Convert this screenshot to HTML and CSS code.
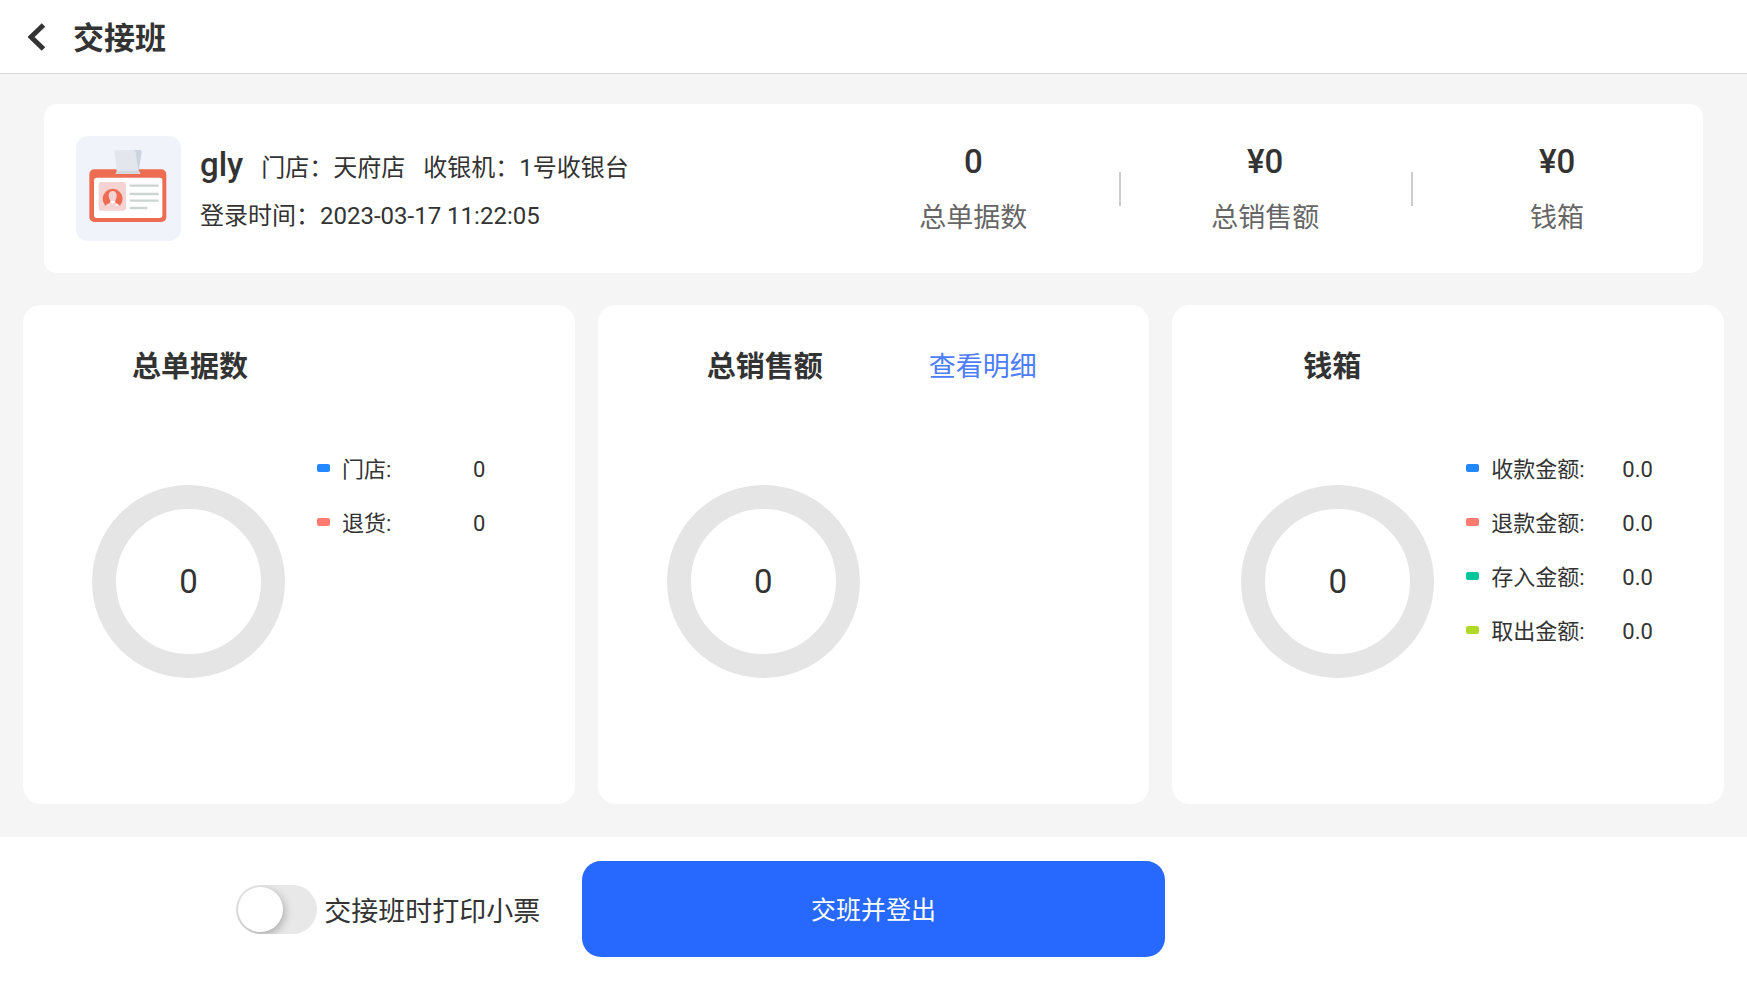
FILE: index.html
```html
<!DOCTYPE html>
<html lang="zh-CN">
<head>
  <meta charset="UTF-8">
  <meta name="viewport" content="width=device-width, initial-scale=1.0">
  <title>交接班</title>
  <link rel="stylesheet" href="styles.css">
</head>
<body>

  <header class="header">
    <button type="button" class="back-btn" aria-label="返回">
      <svg width="18" height="28" viewBox="0 0 18 28">
        <path d="M15.5 2 L3 14 L15.5 26" fill="none" stroke="#333" stroke-width="5"/>
      </svg>
    </button>
    <h1>交接班</h1>
  </header>

  <main class="main">

    <section class="summary">
      <div class="user">
        <div class="avatar">
          <svg viewBox="0 0 315 315">
            <rect x="40" y="100" width="231" height="158" rx="15" fill="#ee6c52"/>
            <rect x="54" y="125" width="205" height="121" rx="8" fill="#fff"/>
            <!-- clip -->
            <path d="M172 42 H192 Q198 43 197 49 L188 105 H172 Z" fill="#ccd2df"/>
            <path d="M122 42 H171 Q178 42 179 49 L187 105 H122 L116 49 Q115 42 122 42 Z" fill="#e3e6ec"/>
            <path d="M123 104 H189 L194 114 H118 Z" fill="#d3d7df"/>
            <!-- photo -->
            <rect x="68" y="138" width="82" height="86" rx="7" fill="#f5d3d2"/>
            <path d="M88 209 A30 30 0 1 1 132 209 Q127 203 118 200 V194 Q122 189 122 178 A12 13 0 0 0 98 178 Q98 189 103 194 V200 Q93 203 88 209 Z" fill="#ee6c52"/>
            <path d="M102 199 Q110 205 118 199 L115 195 H105 Z" fill="#fff"/>
            <path d="M117 204 H126 V210 H120 Z" fill="#fbeae9"/>
            <!-- lines -->
            <path d="M161 149 H248 M161 174 H248 M161 194 H248 M161 216 H214" stroke="#cdd5d3" stroke-width="7"/>
          </svg>
        </div>
        <div class="user-info">
          <div class="user-row">
            <strong class="user-name">gly</strong>
            <span>门店：天府店</span>
            <span>收银机：1号收银台</span>
          </div>
          <div class="user-row">
            <span>登录时间：2023-03-17 11:22:05</span>
          </div>
        </div>
      </div>

      <div class="stats">
        <div class="stat">
          <strong>0</strong>
          <span>总单据数</span>
        </div>
        <div class="stat">
          <strong>¥0</strong>
          <span>总销售额</span>
        </div>
        <div class="stat">
          <strong>¥0</strong>
          <span>钱箱</span>
        </div>
      </div>
    </section>

    <section class="panels">
      <div class="panel">
        <div class="panel-head">
          <h2>总单据数</h2>
        </div>
        <div class="panel-body">
          <div class="ring">0</div>
          <ul class="legend">
            <li><i class="dot blue"></i><span class="label">门店:</span><span>0</span></li>
            <li><i class="dot red"></i><span class="label">退货:</span><span>0</span></li>
          </ul>
        </div>
      </div>

      <div class="panel">
        <div class="panel-head">
          <h2>总销售额</h2>
          <a href="#">查看明细</a>
        </div>
        <div class="panel-body">
          <div class="ring">0</div>
        </div>
      </div>

      <div class="panel cash">
        <div class="panel-head">
          <h2>钱箱</h2>
        </div>
        <div class="panel-body">
          <div class="ring">0</div>
          <ul class="legend">
            <li><i class="dot blue"></i><span class="label">收款金额:</span><span>0.0</span></li>
            <li><i class="dot red"></i><span class="label">退款金额:</span><span>0.0</span></li>
            <li><i class="dot green"></i><span class="label">存入金额:</span><span>0.0</span></li>
            <li><i class="dot lime"></i><span class="label">取出金额:</span><span>0.0</span></li>
          </ul>
        </div>
      </div>
    </section>

  </main>

  <footer class="footer">
    <div class="print-option">
      <input type="checkbox" id="printTicket" class="switch">
      <label for="printTicket">交接班时打印小票</label>
    </div>
    <button type="button" class="submit-btn">交班并登出</button>
  </footer>

</body>
</html>
```
FILE: styles.css
```css
* {
  box-sizing: border-box;
  margin: 0;
  padding: 0;
}

body {
  font-family: Roboto, "Noto Sans CJK SC", sans-serif;
  color: #333;
  background-color: #f5f5f5;
  min-height: 100vh;
  display: flex;
  flex-direction: column;
}

button {
  font-family: inherit;
  border: none;
  cursor: pointer;
}

/* header */
.header {
  display: flex;
  align-items: center;
  gap: 27px;
  height: 74px;
  padding-left: 28px;
  background-color: #fff;
  border-bottom: 1px solid #d8d8d8;
}

.back-btn {
  display: flex;
  background: none;
}

.header h1 {
  padding-top: 5px;
  font-size: 31px;
  font-weight: 700;
  line-height: 40px;
}

.main {
  flex: 1;
  display: flex;
  flex-direction: column;
  gap: 32px;
  padding: 30px 23px 33px;
}

/* user and totals */
.summary {
  display: grid;
  grid-template-columns: 17fr 19fr;
  align-items: center;
  margin: 0 21px;
  padding: 32px 0;
  background-color: #fff;
  border-radius: 13px;
}

.user {
  display: flex;
  align-items: center;
  gap: 19px;
  padding-left: 32px;
}

.avatar {
  width: 105px;
  height: 105px;
  background-color: #f0f4fa;
  border-radius: 12px;
}

.avatar svg {
  display: block;
}

.user-info {
  padding-top: 4px;
}

.user-row {
  display: flex;
  align-items: baseline;
  gap: 18px;
  font-size: 24px;
  line-height: 48px;
  white-space: nowrap;
}

.user-name {
  font-size: 33px;
  font-weight: 500;
}

.stats {
  display: grid;
  grid-template-columns: repeat(3, 1fr);
}

.stat {
  position: relative;
  display: flex;
  flex-direction: column;
  align-items: center;
  gap: 16px;
  padding-top: 3px;
  line-height: 40px;
}

.stat strong {
  font-size: 33px;
  font-weight: 500;
}

.stat span {
  font-size: 27px;
  color: #666;
}

.stat + .stat::before {
  content: "";
  position: absolute;
  left: 0;
  top: 33px;
  width: 2px;
  height: 34px;
  background-color: #ccc;
}

/* panels */
.panels {
  flex: 1;
  display: grid;
  grid-template-columns: repeat(3, 1fr);
  gap: 23px;
}

.panel {
  padding-top: 42px;
  background-color: #fff;
  border-radius: 18px;
}

.panel-head {
  display: flex;
  gap: 106px;
  padding-left: 109px;
  line-height: 40px;
}

.cash .panel-head {
  padding-left: 131px;
}

.panel-head h2 {
  font-size: 29px;
  font-weight: 700;
}

.panel-head a {
  font-size: 27px;
  color: #4c7dff;
  text-decoration: none;
}

.panel-body {
  display: flex;
  align-items: flex-start;
  gap: 32px;
  padding: 54px 0 0 69px;
}

.ring {
  display: flex;
  align-items: center;
  justify-content: center;
  flex: none;
  width: 193px;
  height: 193px;
  margin-top: 44px;
  border: 24px solid #e5e5e5;
  border-radius: 50%;
  font-size: 33px;
}

.legend {
  list-style: none;
  font-size: 22px;
}

.legend li {
  display: flex;
  align-items: center;
  height: 54px;
}

.legend span {
  padding-top: 3px;
  line-height: 26px;
}

.label {
  width: 131px;
}

.dot {
  width: 13px;
  height: 8px;
  margin-right: 12px;
  border-radius: 2px;
}

.blue {
  background-color: #2388ff;
}

.red {
  background-color: #ff7b70;
}

.green {
  background-color: #05c59c;
}

.lime {
  background-color: #b0d827;
}

/* footer */
.footer {
  display: grid;
  grid-template-columns: repeat(3, 1fr);
  align-items: center;
  padding: 24px 0 25px;
  background-color: #fff;
}

.print-option {
  display: flex;
  align-items: center;
  justify-content: flex-end;
  gap: 7px;
  padding-right: 42px;
  font-size: 27px;
}

.switch {
  appearance: none;
  display: flex;
  align-items: center;
  width: 81px;
  height: 49px;
  padding: 2px;
  background-color: #e8e8e8;
  border-radius: 25px;
  overflow: hidden;
  cursor: pointer;
}

.switch::before {
  content: "";
  width: 45px;
  height: 45px;
  background-color: #fff;
  border-radius: 50%;
  box-shadow: 2px 3px 9px rgba(0, 0, 0, 0.25);
}

.switch:checked {
  background-color: #2769ff;
  justify-content: flex-end;
}

.submit-btn {
  height: 96px;
  padding-bottom: 2px;
  font-size: 25px;
  color: #fff;
  background-color: #2769ff;
  border-radius: 19px;
}
```
